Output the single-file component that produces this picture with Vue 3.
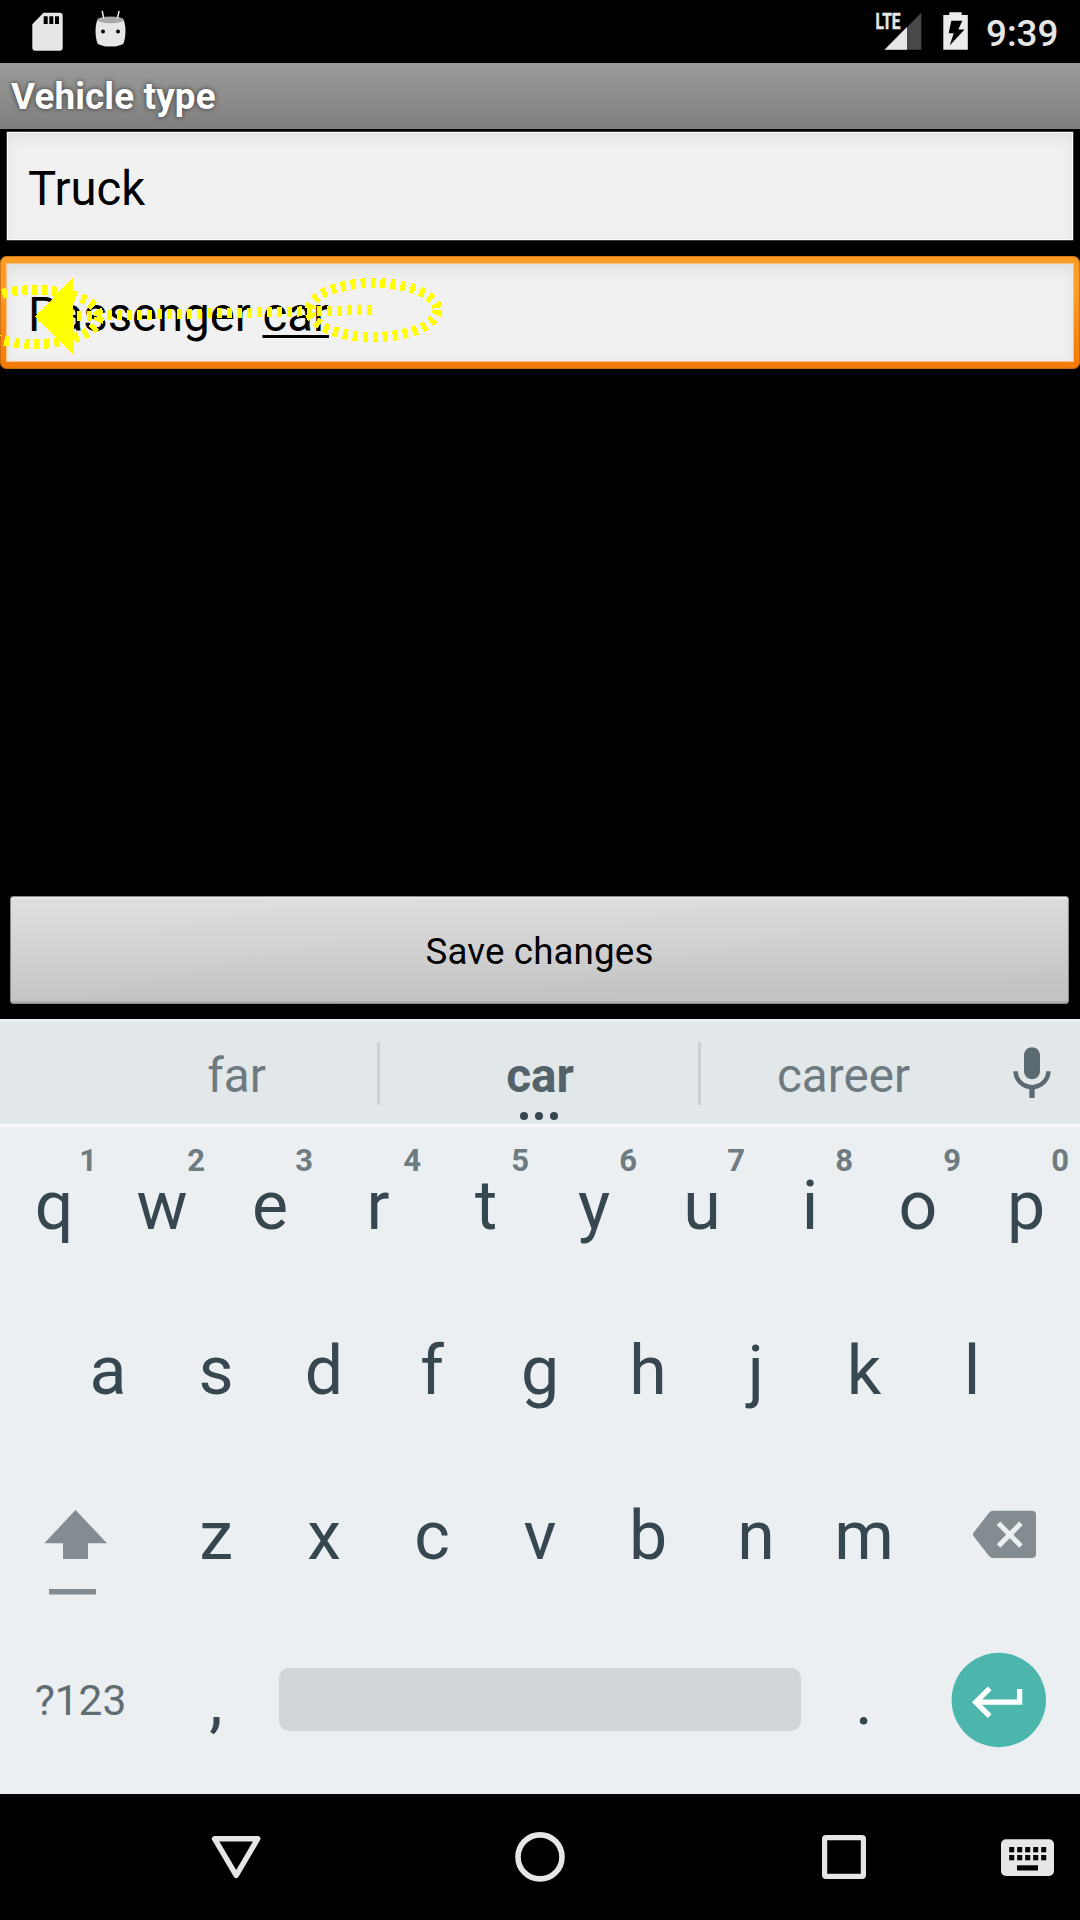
<script setup>
const row1 = 'qwertyuiop'.split('').map((c, i) => ({ c, hint: String((i + 1) % 10) }))
const row2 = 'asdfghjkl'.split('')
const row3 = 'zxcvbnm'.split('')
const kbCols = [8, 16, 24, 32, 40]
</script>

<template>
  <div class="screen">
    <header class="status">
      <svg class="notif" width="140" height="63" viewBox="0 0 140 63">
        <path fill="#e6e6e6" fill-rule="evenodd" d="M43.5 12.7H59.7a3 3 0 0 1 3 3V47.7a3 3 0 0 1-3 3H35.3a3 3 0 0 1-3-3V24.2ZM43.7 16.3V24H47.7V16.3ZM49.3 16.3V24H53.3V16.3ZM55 16.3V24H59V16.3Z" />
        <path fill="#e6e6e6" d="M97.3 20C95 26 94.800 36 97.500 43.500C102 47.600 119 47.600 123.500 43.500C126.200 36 126 26 123.700 20Z" />
        <ellipse cx="110.500" cy="19.800" rx="13.200" ry="3.400" fill="#a9a9a9" />
        <path d="M102.300 11.500L103.700 18M119 11.500L117.500 18" stroke="#e6e6e6" stroke-width="1.500" stroke-linecap="round" />
        <circle cx="103" cy="31.500" r="2" /><circle cx="118" cy="31.500" r="2" />
      </svg>
      <svg class="radio" width="110" height="63" viewBox="870 0 110 63">
        <path d="M884.500 49.700L921.300 12.700V49.700Z" fill="#484848" />
        <path d="M884.500 49.700L907 27.100V49.700Z" fill="#e6e6e6" />
        <text x="875.500" y="29" textLength="25" lengthAdjust="spacingAndGlyphs" class="lte">LTE</text>
        <path fill="#ececec" d="M943.300 15H949.300V12.300H961.700V15H967.800V49.800H943.300Z" />
        <path fill="#000" d="M951.300 20.700H962.300L958.300 29.500H964.500L949.700 45.500L953.700 33.300H948.700Z" />
      </svg>
      <span class="clock">9:39</span>
    </header>

    <div class="titlebar">Vehicle type</div>

    <main class="content">
      <div class="field">Truck</div>
      <div class="field focused"><div class="inner">Passenger <span class="composing">car</span></div>
        <svg class="gesture" width="460" height="100" viewBox="0 266 460 100" shape-rendering="crispEdges">
          <g fill="none" stroke="#ff0" stroke-width="10" stroke-dasharray="5 5">
            <ellipse cx="373.500" cy="310" rx="64" ry="27" />
            <ellipse cx="35" cy="317" rx="64" ry="27" />
            <path d="M372 310L35 317" />
          </g>
          <path d="M35 317L73 277L74 356Z" fill="#ff0" />
        </svg>
      </div>
      <button class="save">Save changes</button>
    </main>

    <section class="keyboard">
      <div class="strip">
        <span class="sug first">far</span>
        <i class="div"></i>
        <span class="sug mid">car
          <svg class="dots" width="40" height="10" viewBox="0 0 40 10"><circle cx="5" cy="5" r="4" /><circle cx="20" cy="5" r="4" /><circle cx="35" cy="5" r="4" /></svg>
        </span>
        <i class="div"></i>
        <span class="sug third">career</span>
        <svg class="mic" width="64" height="64" viewBox="0 0 24 24"><path fill="#5b6a70" d="M12 14c1.660 0 2.990-1.340 2.990-3L15 5c0-1.660-1.340-3-3-3S9 3.340 9 5v6c0 1.660 1.340 3 3 3zm5.300-3c0 3-2.540 5.100-5.300 5.100S6.700 14 6.700 11H5c0 3.410 2.720 6.230 6 6.720V21h2v-3.280c3.280-.480 6-3.300 6-6.720h-1.700z" /></svg>
      </div>

      <div class="row">
        <span v-for="k in row1" :key="k.c" class="key">{{ k.c }}<b class="hint">{{ k.hint }}</b></span>
      </div>
      <div class="row indent">
        <span v-for="k in row2" :key="k" class="key">{{ k }}</span>
      </div>
      <div class="row">
        <svg class="wide" width="162" height="165" viewBox="0 1454 162 165" fill="#838d91">
          <path d="M75.500 1510L107 1543.200H88V1559H63V1543.200H44.300Z" />
          <path d="M49 1589H96V1594.500H49Z" />
        </svg>
        <span v-for="k in row3" :key="k" class="key">{{ k }}</span>
        <svg class="wide" width="162" height="165" viewBox="918 1454 162 165">
          <path fill="#838d91" d="M993 1510.700H1032a4 4 0 0 1 4 4V1554a4 4 0 0 1-4 4H993Q990.500 1558 989 1556L973.500 1536Q972.500 1534.400 973.500 1532.800L989 1512.700Q990.500 1510.700 993 1510.700Z" />
          <path d="M998.500 1523.300L1021 1546M1021 1523.300L998.500 1546" stroke="#ebeff2" stroke-width="5" />
        </svg>
      </div>
      <div class="row">
        <span class="sym">?123</span>
        <span class="key">,</span>
        <span class="space"></span>
        <span class="key">.</span>
        <svg class="wide" width="162" height="165" viewBox="918 1619 162 165">
          <circle cx="998.800" cy="1700" r="47.200" fill="#4db6ac" />
          <path d="M1019.600 1689V1702.200H977M989.700 1688.300L975.700 1702.200L989.700 1716.200" fill="none" stroke="#fff" stroke-width="5.300" />
        </svg>
      </div>
    </section>

    <nav class="nav">
      <svg width="1080" height="126" viewBox="0 1794 1080 126" fill="none" stroke="#e6e6e6">
        <path d="M214.500 1838.700H257.800L236.200 1875.400Z" stroke-width="5.400" stroke-linejoin="round" />
        <circle cx="540" cy="1856.900" r="22" stroke-width="5.600" />
        <rect x="824.600" y="1837.600" width="38.800" height="38.800" rx="1.500" stroke-width="5.200" />
        <rect x="1001" y="1839.300" width="53" height="36.700" rx="5" fill="#e6e6e6" stroke="none" />
        <g fill="#000" stroke="none">
          <template v-for="x in kbCols" :key="x">
            <rect :x="1001.200 + x" y="1847" width="5" height="5.300" />
            <rect :x="1001.200 + x" y="1855" width="5" height="5.300" />
          </template>
          <rect x="1017" y="1865.300" width="21" height="5.200" />
        </g>
      </svg>
    </nav>
  </div>
</template>

<style>
body { margin: 0; background: #000; }
</style>

<style scoped>
.screen { width: 1080px; height: 1920px; display: flex; flex-direction: column; background: #000; font-family: Roboto, sans-serif; overflow: hidden; }
svg { display: block; flex: none; }
.status { height: 63px; flex: none; display: flex; color: #e6e6e6; }
.radio { margin-left: 730px; }
.lte { font-size: 21.5px; font-weight: 700; fill: #e6e6e6; stroke: #e6e6e6; stroke-width: .5px; }
.clock { margin-left: 6px; font-size: 36.75px; line-height: 67px; font-weight: 500; height: 63px; }
.titlebar { height: 66px; flex: none; padding-left: 11px; background: linear-gradient(#9b9b99, #7f7f7f); color: #fff; font-size: 36.75px; font-weight: 700; line-height: 68px; letter-spacing: .17px; text-shadow: 0 0 5px rgba(0,0,0,.65); }
.content { height: 890px; flex: none; display: flex; flex-direction: column; padding-top: 3px; box-sizing: border-box; }
.field { flex: none; box-sizing: border-box; height: 108px; margin: 0 7px; padding-left: 21px; font-size: 47.25px; line-height: 114px; color: #000; background: #f1f1f1; box-shadow: inset 0 0 0 1px #fbfbfb, inset 0 10px 16px -6px #dcdcdc, inset 0 0 12px #e8e8e8, 0 0 0 .5px #777; }
.focused { position: relative; height: 113px; margin: 16px 0 0; padding: 8px 7px; border-radius: 7px; background: linear-gradient(#fd9b27 30%, #f37a07); box-shadow: inset 0 0 0 1px rgba(180,95,10,.6); }
.inner { height: 97px; line-height: 102px; padding-left: 21px; background: #f1f1f1; box-shadow: inset 0 10px 16px -6px #dcdcdc, inset 0 0 12px #e8e8e8, 0 0 0 1px #fbc083; }
.composing { text-decoration: underline; text-decoration-thickness: 3px; text-underline-offset: 4px; text-decoration-skip-ink: none; }
.gesture { position: absolute; left: 0; top: 10px; }
.save { flex: none; margin: 527px 11px 0 10px; height: 108px; padding: 2px 0 0; border: 1px solid #8d8d8d; border-radius: 3px; background: linear-gradient(179deg, #dedede 8%, #c3c3c3 88%); box-shadow: inset 0 2px 0 #e6e6e6, inset 0 -2px 1px #acacac; font: 36.75px/106px Roboto, sans-serif; letter-spacing: .12px; color: #000; }
.keyboard { height: 775px; flex: none; background: #ebeff2; color: #37474f; }
.strip { height: 108px; margin-bottom: -3px; box-sizing: border-box; border-top: 3px solid #ecf0f1; border-bottom: 3px solid #f6f8fa; background: #e2e7ea; display: flex; font-size: 47.6px; line-height: 109px; color: #6d7a80; }
.sug { text-align: center; height: 102px; }
.first { width: 281px; padding-left: 96px; }
.mid { position: relative; width: 318px; font-weight: 700; color: #546269; padding-left: 2px; box-sizing: border-box; }
.third { width: 285px; }
.div { width: 3px; height: 63px; margin-top: 20px; background: #cbd0d3; }
.dots { position: absolute; left: 139px; top: 89px; fill: #37474f; }
.mic { margin: 20px 0 0 14px; }
.row { display: flex; height: 165px; }
.indent { padding-left: 54px; }
.key { position: relative; width: 108px; height: 165px; flex: none; font-size: 68px; line-height: 165px; text-align: center; }
.hint { position: absolute; right: 11px; top: 0; font-size: 31px; line-height: 73px; color: #6e7b81; }
.sym { width: 161px; margin-right: 1px; text-align: center; font-size: 42.5px; line-height: 164px; color: #5f6d73; }
.space { width: 522px; height: 63px; margin: 49px 9px 0; border-radius: 10px; background: #d1d6d9; }
.nav { height: 126px; flex: none; }
</style>
